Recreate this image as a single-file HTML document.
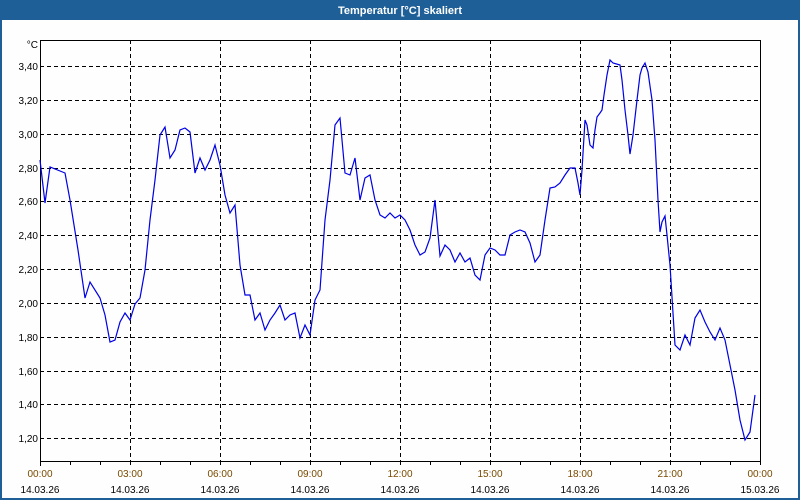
<!DOCTYPE html>
<html><head><meta charset="utf-8"><style>
html,body{margin:0;padding:0;width:800px;height:500px;overflow:hidden;background:#fff}
</style></head><body>
<svg width="800" height="500" xmlns="http://www.w3.org/2000/svg" font-family="Liberation Sans, sans-serif">
<rect x="0" y="0" width="800" height="500" fill="#fdfefd"/>
<rect x="0" y="0" width="800" height="20" fill="#1e5f97"/>
<rect x="0" y="0" width="2" height="500" fill="#1e5f97"/>
<rect x="798" y="0" width="2" height="500" fill="#1e5f97"/>
<rect x="0" y="498" width="800" height="2" fill="#1e5f97"/>
<text x="400" y="14" fill="#fff" font-size="11" font-weight="bold" text-anchor="middle">Temperatur [°C] skaliert</text>
<g stroke="#000" stroke-width="1" stroke-dasharray="4,3" fill="none">
<path d="M40 66.5H760M40 100.5H760M40 134.5H760M40 168.5H760M40 201.5H760M40 235.5H760M40 269.5H760M40 303.5H760M40 337.5H760M40 371.5H760M40 404.5H760M40 438.5H760"/>
<path d="M130.5 40V461M220.5 40V461M310.5 40V461M400.5 40V461M490.5 40V461M580.5 40V461M670.5 40V461"/>
</g>
<g stroke="#000" stroke-width="1" fill="none">
<path d="M40.5 40V461.5H760.5V40M40 40.5H760"/>
<path d="M40.5 461v5M70.5 461v4M100.5 461v4M130.5 461v4M160.5 461v4M190.5 461v4M220.5 461v4M250.5 461v4M280.5 461v4M310.5 461v4M340.5 461v4M370.5 461v4M400.5 461v4M430.5 461v4M460.5 461v4M490.5 461v4M520.5 461v4M550.5 461v4M580.5 461v4M610.5 461v4M640.5 461v4M670.5 461v4M700.5 461v4M730.5 461v4M760.5 461v4"/>
</g>
<g font-size="10" fill="#000" text-anchor="end">
<text x="38" y="48">°C</text>
<text x="38" y="70">3,40</text><text x="38" y="104">3,20</text><text x="38" y="138">3,00</text><text x="38" y="172">2,80</text><text x="38" y="205">2,60</text><text x="38" y="239">2,40</text><text x="38" y="273">2,20</text><text x="38" y="307">2,00</text><text x="38" y="341">1,80</text><text x="38" y="375">1,60</text><text x="38" y="408">1,40</text><text x="38" y="442">1,20</text>
</g>
<g font-size="10" text-anchor="middle">
<g fill="#7a4a00">
<text x="40" y="477">00:00</text><text x="130" y="477">03:00</text><text x="220" y="477">06:00</text><text x="310" y="477">09:00</text><text x="400" y="477">12:00</text><text x="490" y="477">15:00</text><text x="580" y="477">18:00</text><text x="670" y="477">21:00</text><text x="760" y="477">00:00</text>
</g>
<g fill="#000">
<text x="40" y="493">14.03.26</text><text x="130" y="493">14.03.26</text><text x="220" y="493">14.03.26</text><text x="310" y="493">14.03.26</text><text x="400" y="493">14.03.26</text><text x="490" y="493">14.03.26</text><text x="580" y="493">14.03.26</text><text x="670" y="493">14.03.26</text><text x="760" y="493">15.03.26</text>
</g>
</g>
<polyline fill="none" stroke="#0000e6" stroke-width="1.2" points="40,160 45,203 50,167 65,173 70,200 78,250 85,298 90,282 100,298 105,315 110,342 115,340 120,322 125,313 130,320 135,304 140,298 145,270 150,220 155,180 160,135 165,127 170,158 175,150 180,130 185,128 190,132 195,173 200,158 205,170 210,160 215,145 220,165 225,195 230,213 235,205 240,265 245,295 250,295 255,320 260,313 265,330 270,320 275,313 280,305 285,320 290,315 295,313 300,338 305,325 310,335 315,300 320,290 325,220 330,180 335,125 340,118 345,173 350,175 355,158 360,200 365,178 370,175 375,200 380,215 385,218 390,213 395,218 400,215 405,220 410,230 415,245 420,255 425,252 430,238 435,200 440,256 445,245 450,250 455,262 460,253 465,262 470,258 475,275 480,280 485,255 490,248 495,250 500,255 505,255 510,235 515,232 520,230 525,232 530,243 535,262 540,255 545,220 550,188 555,187 560,183 565,175 570,168 575,168 578,183 580,195 582,170 585,120 587,125 590,145 593,148 595,130 597,117 600,113 602,110 604,95 607,75 610,60 613,63 620,65 622,80 625,110 628,135 630,154 633,135 637,100 640,75 642,68 645,63 648,72 652,100 655,140 658,200 660,232 662,222 665,216 667,235 670,265 675,345 680,350 685,335 690,345 695,318 700,310 705,322 710,332 715,340 720,328 725,340 730,365 735,390 740,420 745,440 750,432 755,395"/>
</svg>
</body></html>
